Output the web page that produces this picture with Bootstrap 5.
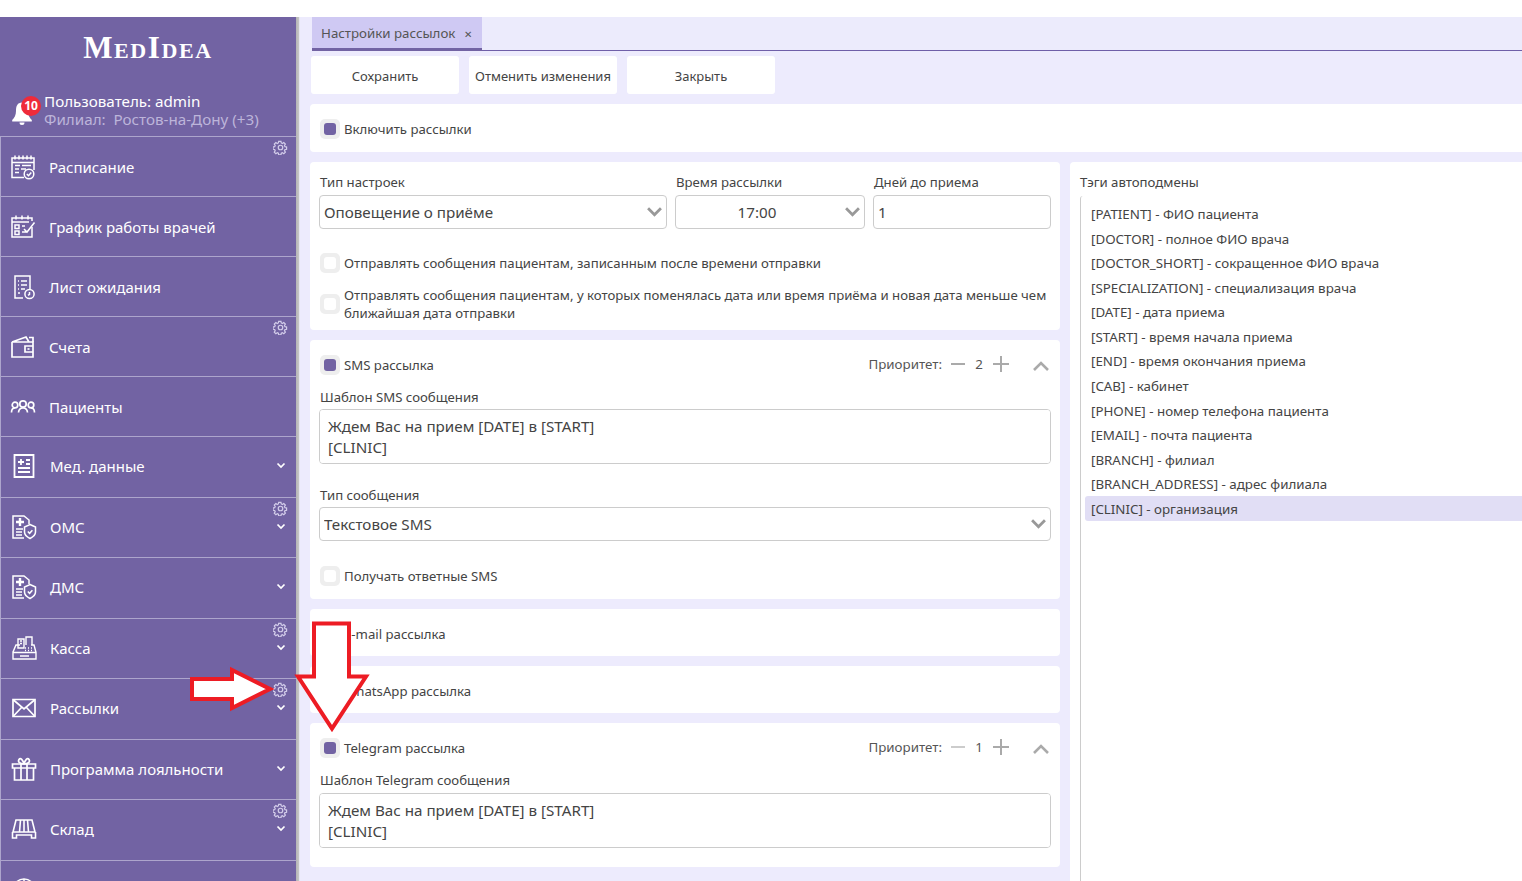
<!DOCTYPE html>
<html lang="ru">
<head>
  <meta charset="UTF-8">
  <meta name="viewport" content="width=device-width, initial-scale=1.0">
  <title>Настройки рассылок</title>
  <link href="https://cdn.jsdelivr.net/npm/bootstrap@5.3.0/dist/css/bootstrap.min.css" rel="stylesheet">
  <style>
    html, body { height: 881px; overflow: hidden; }
    body { background: #fff; color: #444; font-family: "Noto Sans", "Open Sans", sans-serif; font-size: 13.2px; line-height: 18px; }
    .app-shell { margin-top: 17px; height: 864px; }
    .side-panel { width: 300px; flex: none; padding-right: 4px; background: linear-gradient(to right, #7263a3 296px, #b5b5b5 296px, #c6c6c6 299px, #e6e6f0 299px); color: #fff; }
    .side-logo { height: 75px; padding-top: 13px; font-family: "Liberation Serif", serif; font-weight: 700; font-size: 31px; line-height: 36px; font-variant: small-caps; text-align: center; letter-spacing: 1.6px; }
    .side-user { height: 44px; padding-left: 12px; font-size: 15.2px; line-height: 18px; }
    .side-user .branch { color: #bdb5da; }
    .bell-wrap { width: 32px; height: 40px; }
    .bell-wrap svg { margin-top: 10px; display: block; }
    .bell-count { top: 4px; left: 9px; width: 20px; height: 20px; border-radius: 50%; background: #ef2b3a; font-size: 12px; font-weight: 700; line-height: 20px; text-align: center; }
    .side-item { height: 60px; border-top: 1px solid #ada5cc; border-left: 1px solid #ada5cc; padding-left: 9px; font-size: 15px; }
    .side-item.tall { height: 60.5px; padding-left: 10px; padding-bottom: 1px; }
    .side-item > .item-icon { width: 26px; height: 26px; flex: none; margin-right: 13px; }
    .item-gear { top: 3px; right: 8px; width: 15px; height: 15px; }
    .item-chev { top: 25px; right: 10px; width: 10px; height: 7px; }
    .main-area { background: #edebfd; flex: 1; min-width: 0; }
    .tab-strip { height: 34px; margin-left: 12px; border-bottom: 1px solid #6f5fa8; background: #ecebfc; }
    .tab-on { height: 34px; width: 170px; padding: 7px 0 0 9px; background: #cfc9f3; border-bottom: 3px solid #7263a3; color: #555; font-size: 13.3px; }
    .tab-x { margin-left: 9px; font-size: 10px; }
    .tool-row { padding: 5px 0 10px 11px; gap: 10px; }
    .tool-btn { width: 148px; height: 38px; background: #fff; border: 0; border-radius: 3px; color: #444; font-size: 13px; padding: 3px 0 0; }
    .pane-wrap { padding-left: 10px; width: 1400px; }
    .pane { background: #fff; border: 0; border-radius: 4px; padding: 11px 8px 0 10px; margin-bottom: 10px; }
    .pane-head { height: 47px; padding: 15px 10px 0; align-items: flex-start; }
    .pane-head.first { height: 48px; }
    .pane-top { padding-top: 15px; }
    .pane-head > span:last-child { height: 20px; line-height: 20px; }
    .col-left { width: 750px; flex: none; margin-right: 10px; }
    .col-right { width: 640px; flex: none; }
    .tick { width: 20px; height: 20px; flex: none; border-radius: 5px; background: #eee; margin-right: 4px; display: flex; align-items: center; justify-content: center; }
    .tick::after { content: ""; width: 12px; height: 12px; border-radius: 3px; background: #fff; }
    .tick.on::after { background: #7263a3; }
    .fld-label { display: block; margin: 0 0 3px 0; font-size: 13.2px; line-height: 18px; color: #444; }
    .gap-13 { margin-top: 13px; }
    .gap-22 { margin-top: 22px; }
    .gap-25 { margin-top: 25px; }
    .row-two { margin-top: 13px; margin-bottom: 8px; }
    .end-13 { margin-bottom: 13px; }
    .end-19 { margin-bottom: 19px; }
    .pane .form-select, .pane .form-control { font-family: inherit; font-size: 15.2px; color: #444; height: 34px; padding: 0 4px; border-color: #ccc; border-radius: 4px; margin-left: -1px; box-shadow: none; }
    .pane .form-select { background-image: url("data:image/svg+xml,%3csvg xmlns='http://www.w3.org/2000/svg' viewBox='0 0 14 9'%3e%3cpath fill='none' stroke='%23999' stroke-width='2.6' d='M1 1l6 6 6-6'/%3e%3c/svg%3e"); background-position: right 4px center; background-size: 15px 10px; }
    .pane textarea.form-control { height: 55px; padding: 6px 8px; line-height: 21px; resize: none; }
    .pane select.time-select { width: 190px; text-align: center; padding-right: 30px; }
    .w-time { width: 190px; }
    .w-type { width: 348px; }
    .w-days { width: 178px; }
    .prio { font-size: 13.35px; color: #555; margin-top: -2px; }
    .prio-label { margin-right: 9px; }
    .prio-num { width: 28px; text-align: center; }
    .prio-up { margin: 4px 3px 0 24px; }
    .tag-box { margin-top: 1px; height: 700px; border: 1px solid #ccc; border-radius: 3px 0 0 0; padding: 5px 4px; }
    .tag-box .list-group-item { border: 0; padding: 4px 6px 0; height: 24.58px; line-height: 18px; font-size: 13.35px; color: #444; background: transparent; border-radius: 3px; }
    .tag-box .list-group-item.active { background: #e1def5; color: #444; margin: 0; }
    .arrow-layer { position: absolute; top: 0; left: 0; width: 1522px; height: 881px; pointer-events: none; }
  </style>
</head>
<body>
  <svg width="0" height="0" class="position-absolute">
    <defs>
      <symbol id="i-gear" viewBox="0 0 16 16"><g fill="none" stroke="#d3cdea" stroke-width="1.6"><circle cx="8" cy="8" r="2.4" stroke-width="1.3"/><path d="M6.500 .8h3l.4 2.100 1.500.7 1.800-1.200 2.100 2.100-1.200 1.800.7 1.500 2.100.4v3l-2.100.4-.7 1.500 1.200 1.800-2.100 2.100-1.800-1.200-1.500.7-.4 2.100h-3l-.4-2.100-1.500-.7-1.800 1.200-2.100-2.100 1.200-1.800-.7-1.500-2.100-.4v-3l2.100-.4.7-1.500-1.200-1.800 2.100-2.100 1.800 1.200 1.500-.7z" transform="translate(.8 .8) scale(.81)"/></g></symbol>
      <symbol id="i-chev" viewBox="0 0 10 7"><path d="M1.500 1.500L5 5l3.500-3.500" fill="none" stroke="#fff" stroke-width="1.700"/></symbol>
      <symbol id="i-sched" viewBox="0 0 26 26"><g fill="none" stroke="#fff" stroke-width="1.500"><path d="M14 23.500H2V4h22v12"/><path d="M2 8.500h22M5 1.500v4M9 1.500v4M13 1.500v4M17 1.500v4M21 1.500v4"/><path d="M5 11.500h5M12 11.500h9M5 15h4M5 18.500h4M11 15h5"/><circle cx="19" cy="20" r="4.800"/><path d="M16.800 20l1.700 1.700 2.800-3.200"/></g></symbol>
      <symbol id="i-plan" viewBox="0 0 26 26"><g fill="none" stroke="#fff" stroke-width="1.500"><path d="M22 13v10H2V4h20v3"/><path d="M2 8h17M6 1.500v4M12 1.500v4M18 1.500v4"/><rect x="5" y="11" width="4" height="3.500"/><rect x="5" y="17" width="4" height="3.500"/><path d="M12 12h3M12 18h5M14 15l3 3 7.500-9.500"/></g></symbol>
      <symbol id="i-wait" viewBox="0 0 26 26"><g fill="none" stroke="#fff" stroke-width="1.500"><path d="M13 24H5V2h15v13"/><path d="M8 7h1M11 7h6M8 11h1M11 11h6M8 15h1M11 15h4M8 19h2"/><circle cx="19.500" cy="20" r="4.600"/><path d="M19.500 18v2.400l-1.500 1"/></g></symbol>
      <symbol id="i-wallet" viewBox="0 0 26 26"><g fill="none" stroke="#fff" stroke-width="1.700"><path d="M2 8v15h21V8H2l14-5 3 5"/><path d="M19 3.500h4V8"/><path d="M23 12h-8v6h8"/><path d="M17.500 15h2"/></g></symbol>
      <symbol id="i-people" viewBox="0 0 26 26"><g fill="none" stroke="#fff" stroke-width="1.700"><circle cx="13" cy="10" r="3.200"/><circle cx="5" cy="11" r="2.800"/><circle cx="21" cy="11" r="2.800"/><path d="M8.500 18.500c.5-6 8.500-6 9 0M1.500 18.500c0-3 1-4.500 3.500-4.500M24.500 18.500c0-3-1-4.500-3.500-4.500"/></g></symbol>
      <symbol id="i-med" viewBox="0 0 26 26"><g fill="none" stroke="#fff" stroke-width="1.800"><path d="M3.500 2h19v22h-19z"/><path d="M7 9h6M10 6v6M15 7h4M15 11h4M7 15h12M7 19h12"/></g></symbol>
      <symbol id="i-ins" viewBox="0 0 26 26"><g fill="none" stroke="#fff" stroke-width="1.500"><path d="M13 24H2V2h11l5 4v4"/><path d="M9 4v8M5 8h8" stroke-width="2.400"/><path d="M5 15h7M5 18h6M5 21h6"/><path d="M19 10.500l5.500 2.500v5c0 3-2.500 5-5.500 6.500-3-1.500-5.500-3.500-5.500-6.500v-5z"/><path d="M16.800 17.500l1.800 1.800 2.800-3"/></g></symbol>
      <symbol id="i-till" viewBox="0 0 26 26"><g fill="none" stroke="#fff" stroke-width="1.400"><path d="M2 24v-7l3-7h4M2 17.500h23V24H2zM25 17.500l-2-7.500h-3"/><path d="M7 10V4h6v9H7zM15 10V2h6v8"/><path d="M9 6h2M9 8.500h2"/><path d="M14 13h1M17 13h1M20 13h1M14 15.500h1M17 15.500h1M20 15.500h1M9 21h9" stroke-width="1.600"/></g></symbol>
      <symbol id="i-mail" viewBox="0 0 26 26"><g fill="none" stroke="#fff" stroke-width="1.700"><path d="M2 4.500h22v17H2z"/><path d="M2.500 5L13 14 23.500 5M2.500 21L11 12M23.500 21L15 12"/></g></symbol>
      <symbol id="i-gift" viewBox="0 0 26 26"><g fill="none" stroke="#fff" stroke-width="1.700"><path d="M1.500 8h23v4h-23zM3.500 12v12h19V12M10 8v16M16 8v16"/><path d="M13 8C9 8 6.500 6 8 3.500S12 4 13 8c1-4 3.500-7 5-4.500S17 8 13 8z"/></g></symbol>
      <symbol id="i-stock" viewBox="0 0 26 26"><g fill="none" stroke="#fff" stroke-width="1.600"><path d="M5 4h16l3 12H2zM9.500 4L8.500 16M13 4v12M16.500 4l1 12"/><path d="M1.500 16v6h4v-3h15v3h4v-6"/></g></symbol>
      <symbol id="i-globe" viewBox="0 0 26 26"><g fill="none" stroke="#fff" stroke-width="1.500"><circle cx="13" cy="13" r="11"/><path d="M2 13h22M13 2v22"/></g></symbol>
    </defs>
  </svg>

  <div class="app-shell d-flex">
    <aside class="side-panel">
      <div class="side-logo">MedIdea</div>
      <div class="side-user d-flex align-items-start">
        <div class="bell-wrap position-relative">
          <svg width="20" height="24" viewBox="0 0 20 24"><path fill="#fff" d="M10 .5C5.500.5 4 4 4 9c0 4-1.500 7-3.800 9v1.500h19.600V18C17.500 16 16 13 16 9c0-5-1.500-8.500-6-8.500zM7.500 20.500a2.500 2.500 0 0 0 5 0z"/></svg>
          <div class="bell-count position-absolute">10</div>
        </div>
        <div>
          <div>Пользователь: admin</div>
          <div class="branch">Филиал:&nbsp; Ростов-на-Дону (+3)</div>
        </div>
      </div>
      <div class="side-item d-flex align-items-center position-relative"><svg class="item-icon"><use href="#i-sched"/></svg><span>Расписание</span><svg class="item-gear position-absolute"><use href="#i-gear"/></svg></div>
      <div class="side-item d-flex align-items-center position-relative"><svg class="item-icon"><use href="#i-plan"/></svg><span>График работы врачей</span></div>
      <div class="side-item d-flex align-items-center position-relative"><svg class="item-icon"><use href="#i-wait"/></svg><span>Лист ожидания</span></div>
      <div class="side-item d-flex align-items-center position-relative"><svg class="item-icon"><use href="#i-wallet"/></svg><span>Счета</span><svg class="item-gear position-absolute"><use href="#i-gear"/></svg></div>
      <div class="side-item d-flex align-items-center position-relative"><svg class="item-icon"><use href="#i-people"/></svg><span>Пациенты</span></div>
      <div class="side-item tall d-flex align-items-center position-relative"><svg class="item-icon"><use href="#i-med"/></svg><span>Мед. данные</span><svg class="item-chev position-absolute"><use href="#i-chev"/></svg></div>
      <div class="side-item tall d-flex align-items-center position-relative"><svg class="item-icon"><use href="#i-ins"/></svg><span>ОМС</span><svg class="item-gear position-absolute"><use href="#i-gear"/></svg><svg class="item-chev position-absolute"><use href="#i-chev"/></svg></div>
      <div class="side-item tall d-flex align-items-center position-relative"><svg class="item-icon"><use href="#i-ins"/></svg><span>ДМС</span><svg class="item-chev position-absolute"><use href="#i-chev"/></svg></div>
      <div class="side-item tall d-flex align-items-center position-relative"><svg class="item-icon"><use href="#i-till"/></svg><span>Касса</span><svg class="item-gear position-absolute"><use href="#i-gear"/></svg><svg class="item-chev position-absolute"><use href="#i-chev"/></svg></div>
      <div class="side-item tall d-flex align-items-center position-relative"><svg class="item-icon"><use href="#i-mail"/></svg><span>Рассылки</span><svg class="item-gear position-absolute"><use href="#i-gear"/></svg><svg class="item-chev position-absolute"><use href="#i-chev"/></svg></div>
      <div class="side-item tall d-flex align-items-center position-relative"><svg class="item-icon"><use href="#i-gift"/></svg><span>Программа лояльности</span><svg class="item-chev position-absolute"><use href="#i-chev"/></svg></div>
      <div class="side-item tall d-flex align-items-center position-relative"><svg class="item-icon"><use href="#i-stock"/></svg><span>Склад</span><svg class="item-gear position-absolute"><use href="#i-gear"/></svg><svg class="item-chev position-absolute"><use href="#i-chev"/></svg></div>
      <div class="side-item tall d-flex align-items-center position-relative"><svg class="item-icon"><use href="#i-globe"/></svg></div>
    </aside>

    <main class="main-area overflow-hidden">
      <div class="tab-strip">
        <div class="tab-on">Настройки рассылок<span class="tab-x">✕</span></div>
      </div>
      <div class="tool-row d-flex">
        <button class="btn tool-btn">Сохранить</button>
        <button class="btn tool-btn">Отменить изменения</button>
        <button class="btn tool-btn">Закрыть</button>
      </div>
      <div class="pane-wrap">
        <div class="card pane pane-head first flex-row"><span class="tick on"></span><span>Включить рассылки</span></div>
        <div class="d-flex">
          <div class="col-left">
            <div class="card pane">
              <div class="d-flex gap-2">
                <div class="w-type"><label class="fld-label mb-1">Тип настроек</label><select class="form-select"><option>Оповещение о приёме</option></select></div>
                <div class="w-time"><label class="fld-label mb-1">Время рассылки</label><select class="form-select time-select"><option>17:00</option></select></div>
                <div class="w-days"><label class="fld-label mb-1">Дней до приема</label><input class="form-control" value="1"></div>
              </div>
              <div class="d-flex align-items-center mt-4"><span class="tick"></span><span>Отправлять сообщения пациентам, записанным после времени отправки</span></div>
              <div class="d-flex align-items-center row-two"><span class="tick"></span><span>Отправлять сообщения пациентам, у которых поменялась дата или время приёма и новая дата меньше чем ближайшая дата отправки</span></div>
            </div>
            <div class="card pane pane-top">
              <div class="d-flex align-items-center"><span class="tick on"></span><span>SMS рассылка</span>
                <div class="prio d-flex align-items-center ms-auto"><span class="prio-label">Приоритет:</span>
                  <svg width="14" height="14"><path d="M0 7h14" stroke="#aaa" stroke-width="2"/></svg>
                  <span class="prio-num">2</span>
                  <svg width="16" height="16"><path d="M0 8h16M8 0v16" stroke="#aaa" stroke-width="2"/></svg>
                  <svg width="16" height="10" class="prio-up"><path d="M1 9l7-7 7 7" fill="none" stroke="#aaa" stroke-width="2.600"/></svg>
                </div>
              </div>
              <label class="fld-label gap-13">Шаблон SMS сообщения</label>
              <textarea class="form-control">Ждем Вас на прием [DATE] в [START]
[CLINIC]</textarea>
              <label class="fld-label gap-22">Тип сообщения</label>
              <select class="form-select"><option>Текстовое SMS</option></select>
              <div class="d-flex align-items-center gap-25 end-13"><span class="tick"></span><span>Получать ответные SMS</span></div>
            </div>
            <div class="card pane pane-head flex-row"><span class="tick"></span><span>E-mail рассылка</span></div>
            <div class="card pane pane-head flex-row"><span class="tick"></span><span>WhatsApp рассылка</span></div>
            <div class="card pane pane-top">
              <div class="d-flex align-items-center"><span class="tick on"></span><span>Telegram рассылка</span>
                <div class="prio d-flex align-items-center ms-auto"><span class="prio-label">Приоритет:</span>
                  <svg width="14" height="14"><path d="M0 7h14" stroke="#ccc" stroke-width="2"/></svg>
                  <span class="prio-num">1</span>
                  <svg width="16" height="16"><path d="M0 8h16M8 0v16" stroke="#aaa" stroke-width="2"/></svg>
                  <svg width="16" height="10" class="prio-up"><path d="M1 9l7-7 7 7" fill="none" stroke="#aaa" stroke-width="2.600"/></svg>
                </div>
              </div>
              <label class="fld-label gap-13 mb-1">Шаблон Telegram сообщения</label>
              <textarea class="form-control end-19">Ждем Вас на прием [DATE] в [START]
[CLINIC]</textarea>
            </div>
          </div>
          <div class="col-right">
            <div class="card pane h-100">
              <label class="fld-label mb-1">Тэги автоподмены</label>
              <ul class="list-group tag-box">
                <li class="list-group-item">[PATIENT] - ФИО пациента</li>
                <li class="list-group-item">[DOCTOR] - полное ФИО врача</li>
                <li class="list-group-item">[DOCTOR_SHORT] - сокращенное ФИО врача</li>
                <li class="list-group-item">[SPECIALIZATION] - специализация врача</li>
                <li class="list-group-item">[DATE] - дата приема</li>
                <li class="list-group-item">[START] - время начала приема</li>
                <li class="list-group-item">[END] - время окончания приема</li>
                <li class="list-group-item">[CAB] - кабинет</li>
                <li class="list-group-item">[PHONE] - номер телефона пациента</li>
                <li class="list-group-item">[EMAIL] - почта пациента</li>
                <li class="list-group-item">[BRANCH] - филиал</li>
                <li class="list-group-item">[BRANCH_ADDRESS] - адрес филиала</li>
                <li class="list-group-item active">[CLINIC] - организация</li>
              </ul>
            </div>
          </div>
        </div>
      </div>
    </main>
  </div>

  <svg class="arrow-layer" viewBox="0 0 1522 881">
    <path d="M192 679h40v-9l38 19-38 19v-9h-40z" fill="#fff" stroke="#ed1c24" stroke-width="4"/>
    <path d="M314 623.500h35v53h17l-34 52-34-52h16z" fill="#fff" stroke="#ed1c24" stroke-width="4"/>
  </svg>
</body>
</html>
